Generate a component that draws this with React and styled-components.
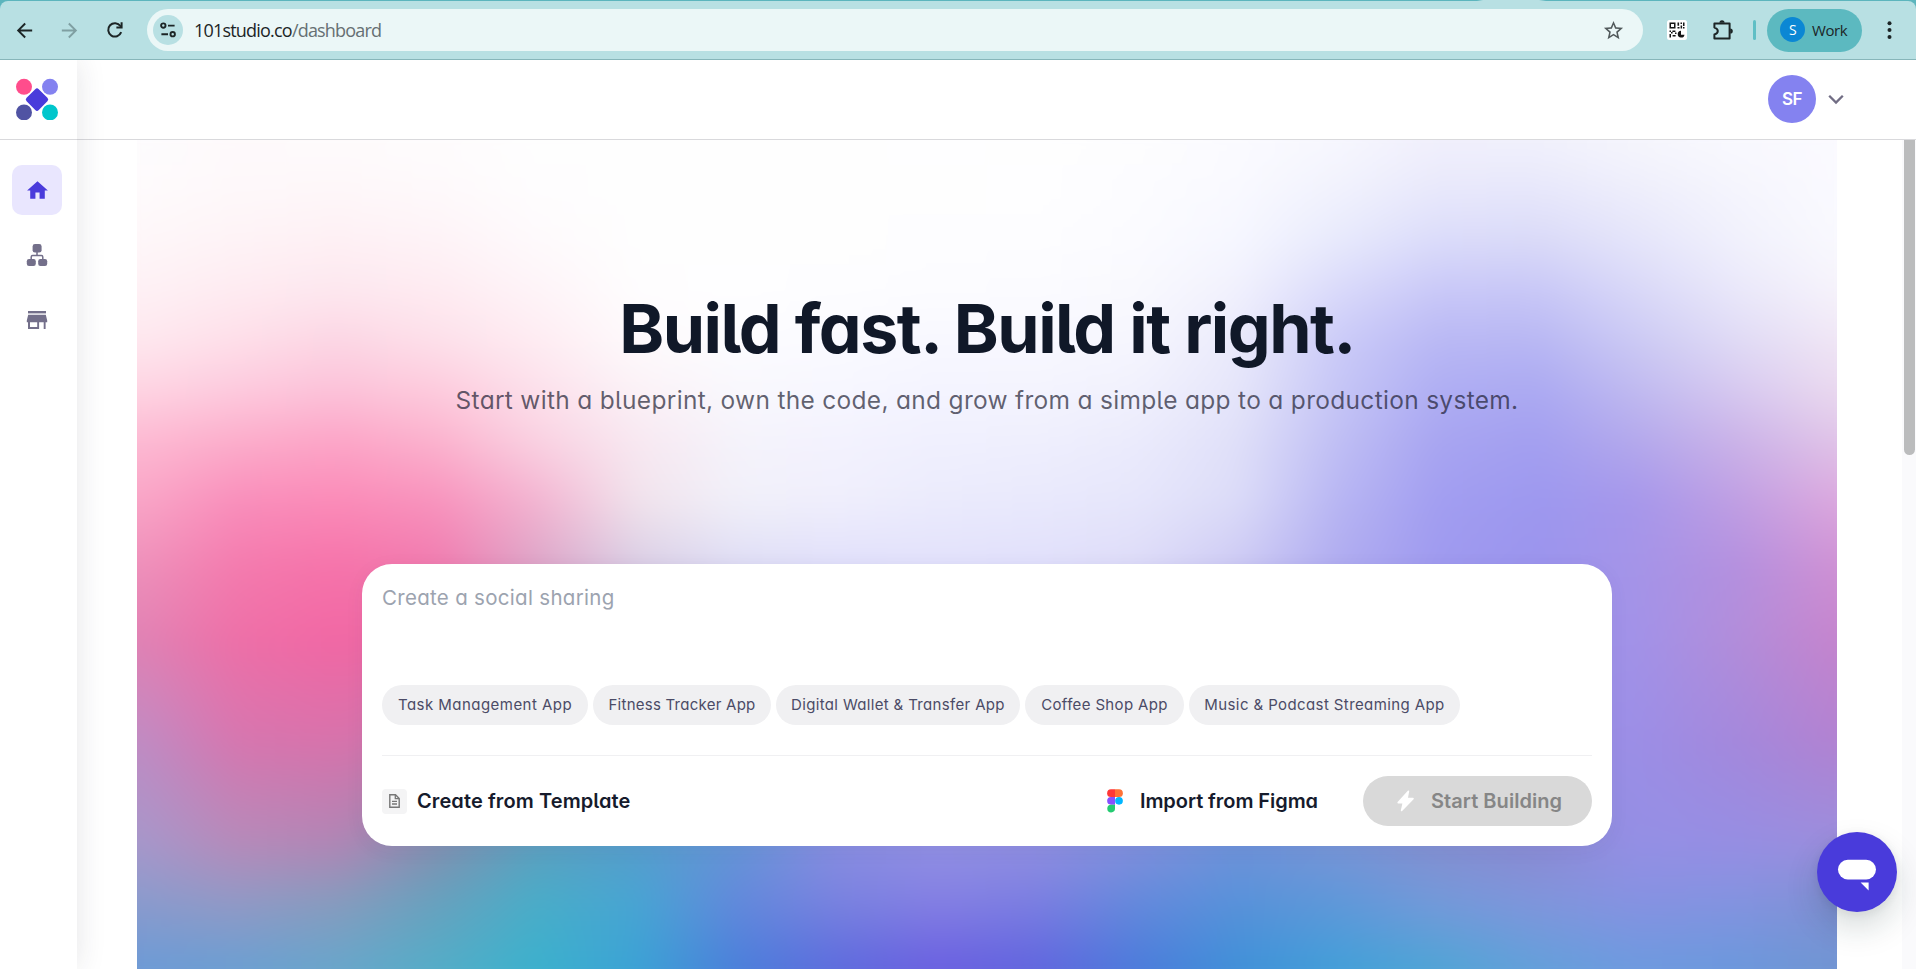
import React from "react";
import styled, { createGlobalStyle } from "styled-components";
import {
  MdArrowBack,
  MdArrowForward,
  MdStarBorder,
  MdHome,
} from "react-icons/md";

const GlobalStyle = createGlobalStyle`
  * {
    box-sizing: border-box;
  }
  html, body, #root {
    height: 100%;
  }
  body {
    margin: 0;
    overflow: hidden;
    background: #fff;
    font-family: "Inter", "Liberation Sans", sans-serif;
  }
  button {
    border: none;
    padding: 0;
    background: none;
    font: inherit;
  }
  svg {
    display: block;
    flex-shrink: 0;
  }
`;

const Window = styled.div`
  display: flex;
  flex-direction: column;
  height: 100vh;
  overflow: hidden;
`;

/* ---------- browser bar ---------- */

const TabStrip = styled.div`
  flex: 0 0 60px;
  padding-top: 1px;
  background: linear-gradient(90deg, #5cb5bd 1477px, #b8e0e3 1483px, #b8e0e3 1539px, #5cb5bd 1546px);
`;

const BrowserBar = styled.div`
  display: flex;
  align-items: center;
  height: 59px;
  background: #b8e0e3;
  border-bottom: 1px solid #87b6ba;
  border-radius: 8px 8px 0 0;
  color: #1c2526;
`;

const NavButtons = styled.div`
  display: flex;
  align-items: center;
  gap: 22px;
  width: 147px;
  padding-left: 13px;
`;

const NavButton = styled.button`
  display: flex;
  margin-left: ${(props) => props.$offset || 0}px;
  color: ${(props) => (props.$muted ? "#7f9fa2" : "#1c2526")};
`;

const AddressBar = styled.div`
  display: flex;
  align-items: center;
  width: 1496px;
  height: 42px;
  padding: 0 18px 0 6px;
  border-radius: 21px;
  background: #ebf7f7;
  color: #51595b;
`;

const SiteInfo = styled.div`
  display: flex;
  align-items: center;
  justify-content: center;
  width: 30px;
  height: 30px;
  border-radius: 50%;
  background: #b8e0e3;
`;

const Url = styled.span`
  flex: 1;
  margin-left: 11px;
  font-family: "Open Sans", "Noto Sans", sans-serif;
  font-size: 18px;
  letter-spacing: -0.8px;
  color: #667073;

  b {
    font-weight: 400;
    color: #1c2526;
  }
`;

const Extensions = styled.div`
  display: flex;
  align-items: center;
  gap: 24px;
  margin-left: 24px;
`;

const BarDivider = styled.span`
  width: 3px;
  height: 20px;
  margin: 0 11px 0 18px;
  border-radius: 2px;
  background: #5fbfc5;
`;

const ProfilePill = styled.div`
  display: flex;
  align-items: center;
  gap: 7px;
  width: 95px;
  height: 43px;
  margin-right: 15px;
  padding: 0 0 1px 13px;
  border-radius: 22px;
  background: #5cb9c0;
  font-family: "Open Sans", "Noto Sans", sans-serif;
  font-size: 15px;
  letter-spacing: -0.45px;
`;

const ProfileLetter = styled.span`
  display: flex;
  align-items: center;
  justify-content: center;
  width: 25px;
  height: 25px;
  border-radius: 50%;
  background: #0b87d4;
  color: #fff;
  font-size: 14px;
`;

/* ---------- app shell ---------- */

const Shell = styled.div`
  display: flex;
  flex: 1;
  min-height: 0;
`;

const Sidebar = styled.aside`
  position: relative;
  z-index: 1;
  flex: 0 0 77px;
  background: #fff;
  box-shadow: 0 0 30px rgba(40, 40, 60, 0.12);
  clip-path: inset(0 -40px 0 0);
`;

const LogoBox = styled.div`
  height: 80px;
  padding: 18px 0 0 15px;
  border-bottom: 1px solid #d9d9dc;
`;

const Nav = styled.nav`
  display: flex;
  flex-direction: column;
  gap: 15px;
  padding: 25px 0 0 12px;
`;

const NavItem = styled.a`
  display: flex;
  align-items: center;
  justify-content: center;
  width: 50px;
  height: 50px;
  border-radius: 10px;
  background: ${(props) => (props.$active ? "#e9e6fe" : "transparent")};
  color: ${(props) => (props.$active ? "#4a3bdb" : "#736f8a")};
`;

const Main = styled.div`
  flex: 1;
  display: flex;
  flex-direction: column;
  min-width: 0;
`;

const Header = styled.header`
  display: flex;
  align-items: center;
  justify-content: flex-end;
  gap: 12px;
  flex: 0 0 80px;
  padding: 0 72px 1px 0;
  border-bottom: 1px solid #d9d9dc;
`;

const Avatar = styled.div`
  display: flex;
  align-items: center;
  justify-content: center;
  width: 48px;
  height: 48px;
  border-radius: 50%;
  background: #8482f0;
  color: #fff;
  font-size: 17px;
  font-weight: 600;
  letter-spacing: -0.5px;
`;

const Scroller = styled.div`
  display: flex;
  flex: 1;
  min-height: 0;
  padding-left: 60px;
`;

const ScrollTrack = styled.div`
  width: 14px;
  margin-left: 65px;
  padding-left: 2px;
  background: #fafafc;
`;

const ScrollThumb = styled.div`
  width: 11px;
  height: 315px;
  border-radius: 0 0 6px 6px;
  background: #bbbcbd;
`;

/* ---------- hero ---------- */

const BLEED = 36;

const Hero = styled.section`
  position: relative;
  display: flex;
  flex-direction: column;
  align-items: center;
  width: 1700px;
  overflow: hidden;
`;

/* reaches past the hero so that the blur does not fade its edges */
const Mesh = styled.div`
  position: absolute;
  inset: -${BLEED}px;
  filter: blur(16px);
`;

const MeshLayer = styled.div`
  position: absolute;
  inset: 0;
  background: linear-gradient(90deg, ${(props) => props.$stops});
  mask-image: ${(props) =>
    props.$to > 0
      ? `linear-gradient(180deg, transparent ${props.$from + BLEED}px, #000 ${
          props.$to + BLEED
        }px)`
      : "none"};
`;

const Title = styled.h1`
  position: relative;
  margin: 146px 0 0;
  font-size: 68px;
  line-height: 84px;
  font-weight: 700;
  letter-spacing: -1.5px;
  font-feature-settings: "cv11", "cv05";
  color: #101828;
`;

const Subtitle = styled.p`
  position: relative;
  margin: 12px 0 0;
  font-size: 24.5px;
  line-height: 36px;
  letter-spacing: 0.3px;
  font-feature-settings: "cv11", "cv05";
  color: rgba(30, 30, 50, 0.7);
`;

const PromptCard = styled.div`
  position: relative;
  width: 1250px;
  height: 282px;
  margin-top: 146px;
  padding: 20px;
  border-radius: 30px;
  background: #fff;
  box-shadow: 0 4px 20px rgba(60, 50, 90, 0.05);
`;

const Placeholder = styled.div`
  height: 101px;
  font-size: 20.5px;
  line-height: 27px;
  letter-spacing: 0.3px;
  font-feature-settings: "cv11";
  color: #9ca3af;
`;

const Chips = styled.div`
  display: flex;
  gap: 5px;
  padding-bottom: 30px;
  border-bottom: 1px solid #f0f0f2;
`;

const Chip = styled.button`
  width: ${(props) => props.$width}px;
  height: 40px;
  padding-bottom: 2px;
  border-radius: 20px;
  background: #f0f0f2;
  color: #4b4b66;
  font-size: 15px;
  letter-spacing: ${(props) => props.$spacing}px;
  font-feature-settings: "cv11";
  white-space: nowrap;
`;

const Actions = styled.div`
  display: flex;
  align-items: center;
  height: 50px;
  margin-top: 20px;
`;

const Action = styled.button`
  display: flex;
  align-items: center;
  gap: ${(props) => props.$gap}px;
  margin-left: ${(props) => (props.$end ? "auto" : 0)};
  font-size: 20px;
  font-weight: 600;
  letter-spacing: ${(props) => props.$spacing}px;
  font-feature-settings: "cv11", "cv05";
  color: #161b2c;
`;

const DocBadge = styled.span`
  display: flex;
  align-items: center;
  justify-content: center;
  width: 25px;
  height: 25px;
  border-radius: 4px;
  background: #f4f4f5;
`;

const StartButton = styled.button`
  display: flex;
  align-items: center;
  gap: 16px;
  width: 229px;
  height: 50px;
  margin-left: 45px;
  padding-left: 33px;
  border-radius: 25px;
  background: #d9d9d9;
  color: #868686;
  font-size: 20px;
  font-weight: 600;
  letter-spacing: 0.05px;
  white-space: nowrap;
`;

const ChatBubble = styled.button`
  position: fixed;
  right: 19px;
  bottom: 57px;
  z-index: 2;
  display: flex;
  align-items: center;
  justify-content: center;
  width: 80px;
  height: 80px;
  padding-top: 6px;
  border-radius: 50%;
  background: #493bdb;
  box-shadow: 0 16px 32px rgba(20, 50, 50, 0.17), 0 2px 12px rgba(20, 50, 50, 0.08);
`;

/* every row holds the colours across the hero at one height */
const mesh = [
  [0, "fdfcfe fefafb fefbfc fefcfd fefefe fefefe fefefe fefefe fefeff fefefe fdfdfe fbfbff f7f7fe f1f0fc f1f1fc f6f6fd f9f9fe fbfaff"],
  [50, "fefbfc fef8fa fef7f9 fef9fb fefdfe fefefe fefefe fefefe fefefe fefeff fcfcff f9f9ff f1f2fd e8e8fb e7e7fb eeeefb f5f5fd fafaff"],
  [100, "fef7f9 fef3f6 fef0f4 fef3f7 fefafc fefefe fefefe fefefe fdfdff fdfdff fbfbff f6f7ff e8eafc dbdcfa dadaf8 e5e5fa f1f1fc f9f9fe"],
  [150, "fef1f5 feebf1 fde7ef feebf1 fef4f8 fefdfe fefeff fdfdff fcfcff fbfbff f9f9fe f1f1fd dadafa c9c8f8 c8c7f7 d9d8f8 eae8fa f6f3fb"],
  [200, "fee8ef fedfe9 fcd6e4 fde0ea feecf2 fefafc fcfcff fafaff f8f8ff f8f8ff f6f6fe eaeafb cbcbf8 b9b8f4 b8b7f3 cccaf4 e0dbf5 f0e6f5"],
  [250, "fed5e3 fdcade fcc2d9 fdcbdd fce0eb fbf2f7 f9f8fd f7f7ff f4f4ff f4f4fe f1f1fd e6e6fa c6c6f6 afaef3 aba9f2 c0baf0 d7c9f0 ead9ef"],
  [300, "fdbad3 fcaecb fca5c7 fbb3ce fad2e2 f8e8f1 f5f3fb f3f2fe f0f0fe efeffd ebebfc e0e0f9 c0bff4 a8a5f1 a39ff0 b4a9ec cbb3e8 e0c4e8"],
  [360, "f9a6c7 f98ebb fb8bb8 f893bd f3b4d1 f1e3ec f1f0f9 f0effc ebebfc e9e9fc e6e6fb dcdcf8 b8b6f3 a29ef1 9d98ef a697eb c09fe3 dca8de"],
  [425, "ee91bb f47bae f673aa f07baf dca6c8 dacfe5 dfdef5 e1e0fb e2e1fb e1e0fb dedcf8 cecbf4 b0acf0 9f9aef 9b94ed a594e8 b490df cf91d4"],
  [500, "e082b4 ee6fa7 f267a4 e86ba3 cf80b8 b8a0cf b8aee0 c0bcec c8c4f2 c6c2f2 c0bcf0 b4b0ee a8a2ec 9f98ec 9b93eb a292e8 b28dda c584cd"],
  [600, "bf8cc4 d776af d872ab c87aaf a890bd 88a0c8 88a4d8 98a0e2 a49ee8 a09ce6 9898e4 9098e0 9898e0 9a94e4 9990e8 9c8ee6 a488dc b282d1"],
  [706, "a598cb b58bba b086b5 8090b0 5aa0bf 559dcc 6594d6 888ce0 918fe3 8f8ee0 7f8fdc 6d92d9 7795d6 838fd0 8a8ad2 948fe5 968ee3 9a8edd"],
  [760, "8b9bcd 9399c5 889bbd 68a1be 4aadc8 48a5d3 6389dc 7a83e0 8580e4 7c7fe2 658adc 5992da 6098da 7599da 8195dc 8792e2 8493e0 8190d4"],
  [829, "6c9ad6 6b9fd2 68a6cb 54adc7 3bb1cd 3ba2d5 4a7fda 5d6bdd 6a5fe0 6065de 4b7bdb 3f90d8 429fd8 4fa5d5 63a0da 6d9adf 6b98dc 7095d2"],
];

const chips = [
  { label: "Task Management App", width: 206, spacing: 0.46 },
  { label: "Fitness Tracker App", width: 178, spacing: 0.25 },
  { label: "Digital Wallet & Transfer App", width: 244, spacing: 0.34 },
  { label: "Coffee Shop App", width: 159, spacing: 0.35 },
  { label: "Music & Podcast Streaming App", width: 271, spacing: 0.4 },
];

const toStops = (row) =>
  row
    .split(" ")
    .map((color, i) => `#${color} ${i * 100 + BLEED}px`)
    .join(", ");

const ReloadIcon = () => (
  <svg width="18" height="18" viewBox="0 0 18 18" fill="none">
    <path
      d="M15.2 11.2A6.7 6.7 0 1 1 14.4 5"
      stroke="currentColor"
      strokeWidth="2"
    />
    <path d="M16.6 1.2v6.2h-6.2v-2h3.2l1-1.2V1.2z" fill="currentColor" />
  </svg>
);

const TuneIcon = () => (
  <svg width="16" height="16" viewBox="0 0 16 16" fill="none">
    <g stroke="#1c2526" strokeWidth="1.9">
      <circle cx="3.3" cy="3.6" r="2.2" />
      <path d="M8 3.6h6.6M1.4 12.2H8" />
      <circle cx="12.7" cy="12.2" r="2.2" />
    </g>
  </svg>
);

const QrIcon = () => (
  <svg width="20" height="20" viewBox="0 0 20 20">
    <rect width="20" height="20" rx="2.5" fill="#fff" />
    <g fill="#151515">
      <path
        fillRule="evenodd"
        d="M2.5 2.5h6v6h-6zM4 4v3h3V4zM10.5 2.5h1.6v3.2h-1.6zM13.5 2.5h1.5v1.5h-1.5zM16 2.5h1.5v3.4H16zM10.5 7h2v1.5h-2zM13.6 5.4h1.5v3h-1.5zM16 7h1.5v1.5H16z"
      />
      <path d="M2.5 10.5H4V12H2.5zM5.4 10.5h3V12h-3zM4 12h1.6v1.6H4zM2.5 14H4v3.5H2.5zM5.6 15h3v1.5h-3zM8 12.5h1.5V14H8z" />
      <path d="M14 10.8a3.4 3.4 0 1 0 3.5 3.9H14z" />
    </g>
  </svg>
);

const PuzzleIcon = () => (
  <svg width="24" height="24" viewBox="0 0 24 24">
    <path
      d="M3.4 5.4h15.2v15.2H3.4v-4.2q3.4-1 3.4-3.4T3.4 9.6z"
      fill="none"
      stroke="currentColor"
      strokeWidth="2"
      strokeLinejoin="round"
    />
    <path
      d="M8.4 4.8a2.6 2.6 0 0 1 5.2 0zM19.2 10.4a2.6 2.6 0 0 1 0 5.2z"
      fill="currentColor"
    />
  </svg>
);

const MoreIcon = () => (
  <svg width="5" height="20" viewBox="0 0 5 20" fill="currentColor">
    <circle cx="2.5" cy="3.3" r="2" />
    <circle cx="2.5" cy="10.1" r="2" />
    <circle cx="2.5" cy="16.9" r="2" />
  </svg>
);

const Logo = () => (
  <svg width="44" height="42" viewBox="0 0 44 42">
    <circle cx="9" cy="8.8" r="8" fill="#ff4d8c" />
    <circle cx="35" cy="8.8" r="8" fill="#8482f0" />
    <circle cx="9" cy="34.4" r="8" fill="#5053a3" />
    <circle cx="35" cy="34.4" r="8" fill="#00c6cc" />
    <rect
      x="13.4"
      y="13"
      width="17.2"
      height="17.2"
      rx="2.5"
      fill="#493bdb"
      transform="rotate(45 22 21.6)"
    />
  </svg>
);

const SitemapIcon = () => (
  <svg width="22" height="24" viewBox="0 0 22 24" fill="currentColor">
    <rect x="6.6" y="1" width="9" height="8.6" rx="2.4" />
    <rect x="0.8" y="16" width="9" height="7" rx="2.2" />
    <rect x="12.2" y="16" width="9" height="7" rx="2.2" />
    <path
      d="M11 9v3.6M5.2 16.5v-2.4q0-1.5 1.5-1.5h8.6q1.5 0 1.5 1.5v2.4"
      fill="none"
      stroke="currentColor"
      strokeWidth="1.5"
    />
  </svg>
);

const StoreIcon = () => (
  <svg width="22" height="20" viewBox="0 0 22 20" fill="currentColor">
    <rect x="2" y="1" width="18" height="2.4" />
    <path
      fillRule="evenodd"
      d="M2.2 4.8h17.6l1.4 5.6v1.8h-1.6V19h-1.9v-6.8h-4.6V19H2v-6.8H.8v-1.8zM4 12.2v4.9h7.2v-4.9z"
    />
  </svg>
);

const ChevronIcon = () => (
  <svg width="16" height="11" viewBox="0 0 16 11" fill="none">
    <path d="M1.2 1.8L8 8.6l6.8-6.8" stroke="#716d84" strokeWidth="2.3" />
  </svg>
);

const DocIcon = () => (
  <svg width="11" height="14" viewBox="0 0 11 14" fill="none" stroke="#777">
    <path d="M.8.8h5.7l3.7 3.7v8.7H.8z" strokeWidth="1.4" />
    <path d="M6.3 1v3.7H10M3 7.3h5M3 10h5" strokeWidth="1.3" />
  </svg>
);

const FigmaIcon = () => (
  <svg width="16" height="24" viewBox="0 0 16 24">
    <path d="M8 .3H4a3.85 3.85 0 0 0 0 7.7h4z" fill="#ff3737" />
    <path d="M8 .3h4A3.85 3.85 0 0 1 12 8H8z" fill="#ff7237" />
    <path d="M8 8H4a3.85 3.85 0 0 0 0 7.7h4z" fill="#874fff" />
    <circle cx="12" cy="11.85" r="3.85" fill="#00b6ff" />
    <path d="M8 15.7H4a3.85 3.85 0 1 0 4 3.85z" fill="#24cb71" />
  </svg>
);

const BoltIcon = () => (
  <svg width="19" height="22" viewBox="0 0 19 22">
    <path
      d="M12.4 1.4L2.2 12.6h5.2L5.6 20.4 17 8.6h-6z"
      fill="#fff"
      stroke="#fff"
      strokeWidth="1.6"
      strokeLinejoin="round"
    />
  </svg>
);

const ChatIcon = () => (
  <svg width="40" height="32" viewBox="0 0 40 32" fill="#fff">
    <rect x="1" y="0.8" width="38" height="19.6" rx="9.8" />
    <path d="M23.6 23.6h8v7.8z" />
  </svg>
);

export default function App() {
  return (
    <Window>
      <GlobalStyle />
      <TabStrip>
        <BrowserBar>
          <NavButtons>
            <NavButton aria-label="Back">
              <MdArrowBack size={23} />
            </NavButton>
            <NavButton aria-label="Forward" $muted>
              <MdArrowForward size={23} />
            </NavButton>
            <NavButton aria-label="Reload" $offset={3}>
              <ReloadIcon />
            </NavButton>
          </NavButtons>
          <AddressBar>
            <SiteInfo>
              <TuneIcon />
            </SiteInfo>
            <Url>
              <b>101studio.co</b>/dashboard
            </Url>
            <MdStarBorder size={23} />
          </AddressBar>
          <Extensions>
            <QrIcon />
            <PuzzleIcon />
          </Extensions>
          <BarDivider />
          <ProfilePill>
            <ProfileLetter>S</ProfileLetter>
            Work
          </ProfilePill>
          <NavButton aria-label="Menu" $offset={10}>
            <MoreIcon />
          </NavButton>
        </BrowserBar>
      </TabStrip>

      <Shell>
        <Sidebar>
          <LogoBox>
            <Logo />
          </LogoBox>
          <Nav>
            <NavItem $active>
              <MdHome size={25} />
            </NavItem>
            <NavItem>
              <SitemapIcon />
            </NavItem>
            <NavItem>
              <StoreIcon />
            </NavItem>
          </Nav>
        </Sidebar>

        <Main>
          <Header>
            <Avatar>SF</Avatar>
            <ChevronIcon />
          </Header>
          <Scroller>
            <Hero>
              <Mesh>
                {mesh.map(([y, row], i) => (
                  <MeshLayer
                    key={y}
                    $stops={toStops(row)}
                    $from={i > 0 ? mesh[i - 1][0] : 0}
                    $to={y}
                  />
                ))}
              </Mesh>
              <Title>Build fast. Build it right.</Title>
              <Subtitle>
                Start with a blueprint, own the code, and grow from a simple app
                to a production system.
              </Subtitle>
              <PromptCard>
                <Placeholder>Create a social sharing</Placeholder>
                <Chips>
                  {chips.map((chip) => (
                    <Chip
                      key={chip.label}
                      $width={chip.width}
                      $spacing={chip.spacing}
                    >
                      {chip.label}
                    </Chip>
                  ))}
                </Chips>
                <Actions>
                  <Action $gap={10} $spacing={0.1}>
                    <DocBadge>
                      <DocIcon />
                    </DocBadge>
                    Create from Template
                  </Action>
                  <Action $gap={17} $spacing={-0.06} $end>
                    <FigmaIcon />
                    Import from Figma
                  </Action>
                  <StartButton>
                    <BoltIcon />
                    Start Building
                  </StartButton>
                </Actions>
              </PromptCard>
            </Hero>
            <ScrollTrack>
              <ScrollThumb />
            </ScrollTrack>
          </Scroller>
        </Main>
      </Shell>

      <ChatBubble aria-label="Open chat">
        <ChatIcon />
      </ChatBubble>
    </Window>
  );
}
